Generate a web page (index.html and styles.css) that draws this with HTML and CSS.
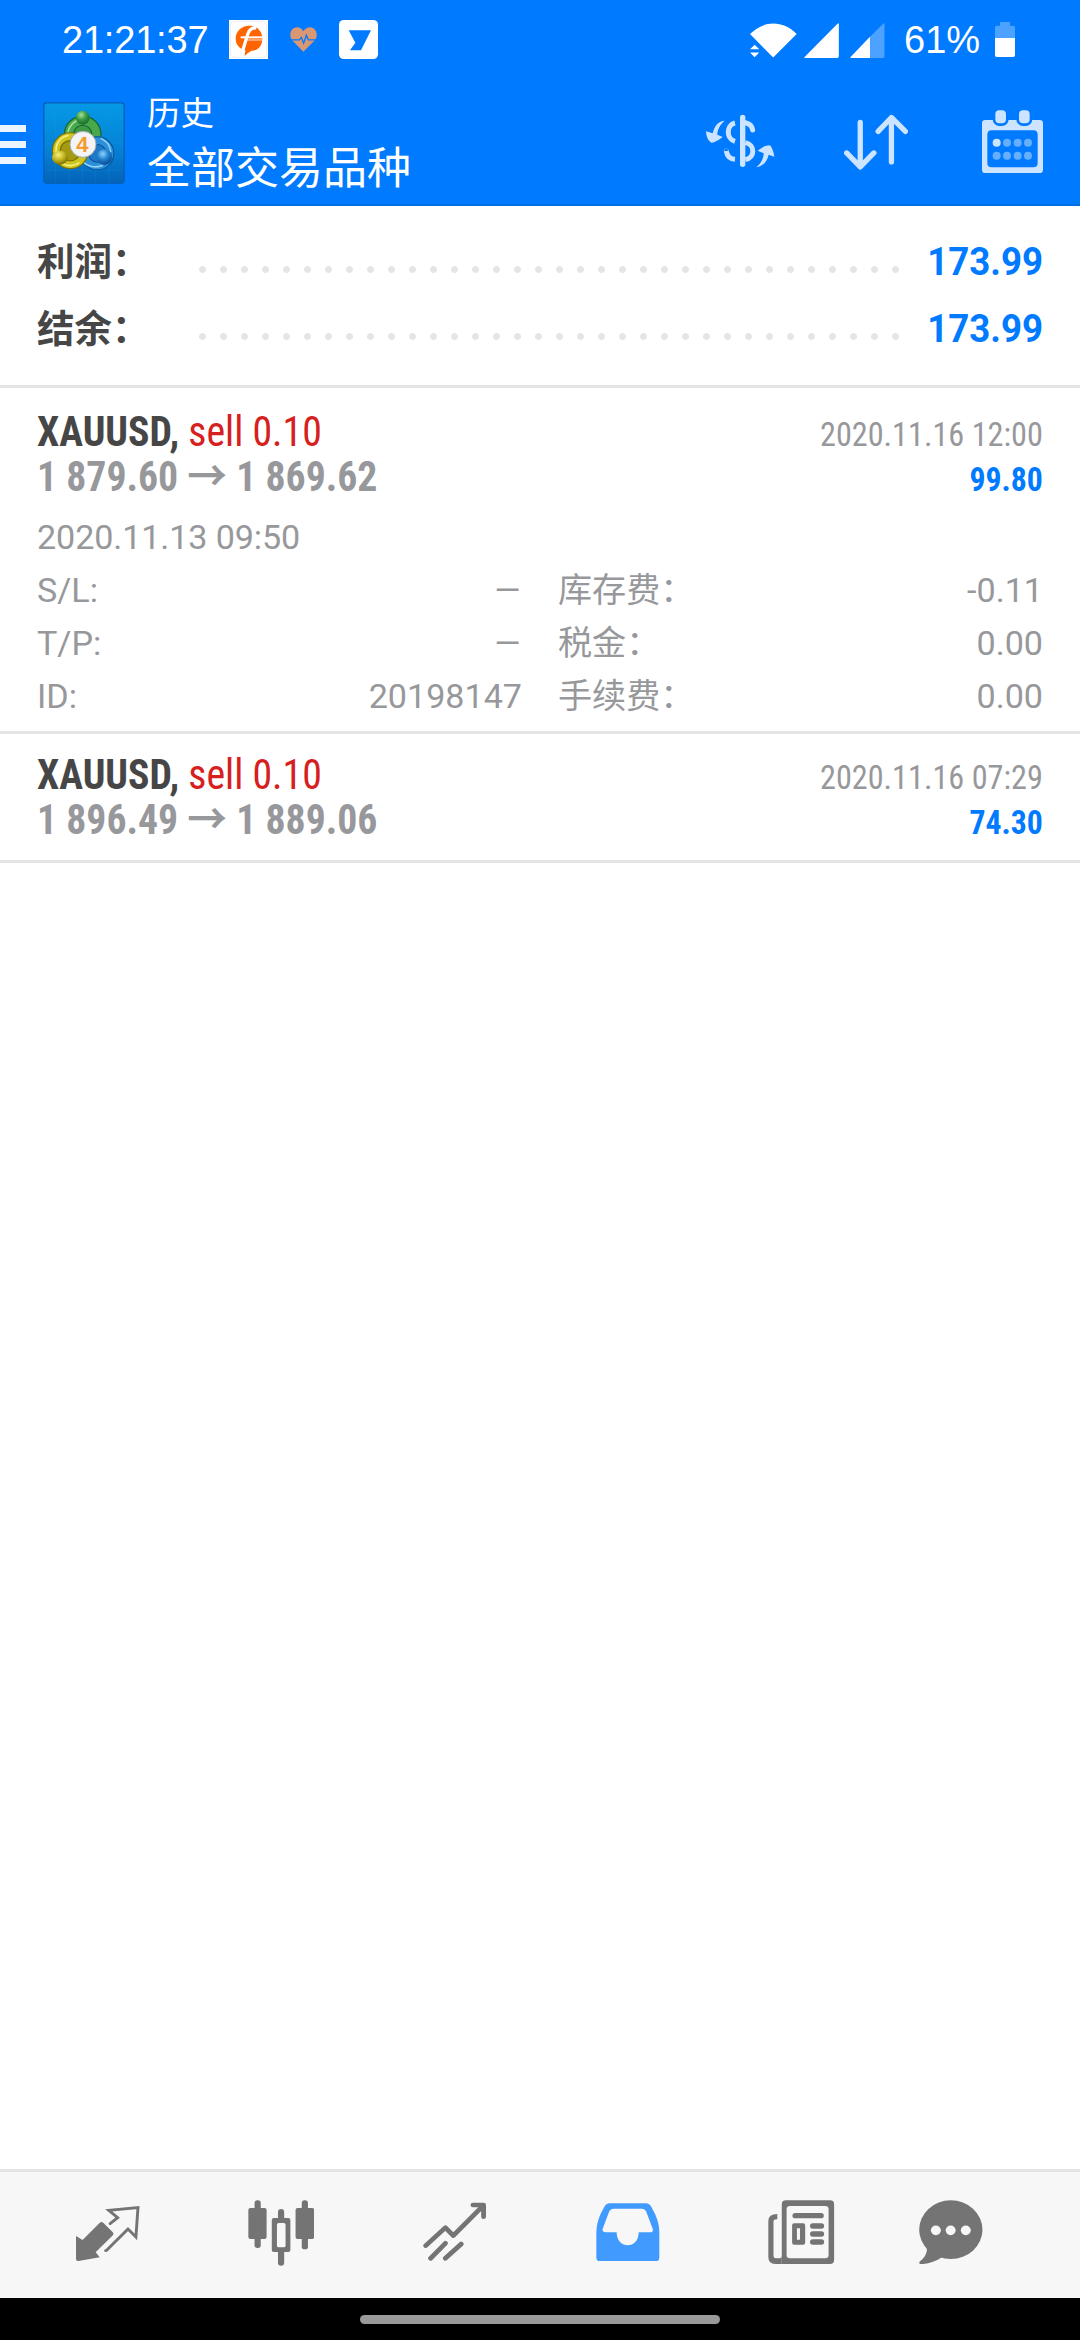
FILE: index.html
```html
<!DOCTYPE html>
<html lang="zh-CN">
<head>
<meta charset="utf-8">
<title>历史</title>
<link rel="stylesheet" href="styles.css">
</head>
<body>
<div class="screen">
  <header class="header">
    <div class="status">
      <span class="status-text clock">21:21:37</span>
      <svg class="note-f" viewBox="687 60 117 117"><rect x="687" y="60" width="117" height="117" fill="#fff"/><rect x="691" y="64" width="109" height="109" rx="14" fill="none" stroke="#dfe3f5" stroke-width="2"/><path fill="#ff6400" d="M748 77C772 77 787 94 787 116C787 139 772 152 755 152C748 155 742 160 734 168L736 151C718 146 707 133 707 116C707 94 724 77 748 77Z"/><path fill="none" stroke="#fff" stroke-width="10" d="M769 84C752 81 746 92 742 106L728 152"/><path stroke="#fff" stroke-width="6" d="M722 112H788"/><path stroke="#fff" stroke-width="2.500" d="M740 120H788"/></svg>
      <svg class="note-heart" viewBox="872 83 81 74"><path fill="#d99873" d="M912 157L880 124C867 110 872 84 893 83C902 83 909 88 912 95C916 88 923 83 932 83C953 84 958 110 945 124Z"/><path fill="none" stroke="#007aff" stroke-width="4" d="M872 121H900L906 114L913 131L921 107L927 121H953"/></svg>
      <svg class="note-seven" viewBox="1017 60 117 117"><rect x="1017" y="60" width="117" height="117" rx="14" fill="#fff"/><path fill="#007aff" d="M1046 91H1113L1083 151H1050L1066 128Z"/></svg>
      <svg class="wifi" viewBox="210 68 142 105"><path fill="#fff" d="M280 172L210 101C252 59 309 59 351 101ZM210 147L224 133L238 147ZM210 157H238L224 171Z"/></svg>
      <svg class="signal-one" viewBox="372 68 105 106"><path fill="#fff" d="M477 70V169Q477 174 472 174H374Q371 173 374 170L473 70Q477 67 477 70Z"/></svg>
      <svg class="signal-two" viewBox="510 68 105 106"><path fill="#4da2ff" d="M614 70V169Q614 174 609 174H570V110L610 70Q614 67 614 70Z"/><path fill="#fff" d="M570 110V174H512Q509 173 512 170Z"/></svg>
      <span class="status-text percent">61%</span>
      <svg class="battery" viewBox="945 66 60 105"><path fill="#4da2ff" d="M945 114V82Q945 77 950 77H960V66H990V77H1000Q1005 77 1005 82V114Z"/><path fill="#fff" d="M945 114H1005V166Q1005 171 1000 171H950Q945 171 945 166Z"/></svg>
    </div>
    <div class="appbar">
      <div class="menu"><i></i><i></i><i></i></div>
      <svg class="logo" viewBox="42 36 246 246">
        <defs>
          <linearGradient id="sky" x1="0" y1="0" x2="0" y2="1"><stop offset="0" stop-color="#0499e6"/><stop offset=".55" stop-color="#0583d6"/><stop offset="1" stop-color="#0463b8"/></linearGradient>
          <radialGradient id="green" cx=".4" cy=".3" r=".7"><stop offset="0" stop-color="#a4e39e"/><stop offset=".5" stop-color="#3b9d45"/><stop offset="1" stop-color="#176b2c"/></radialGradient>
          <radialGradient id="gold" cx=".4" cy=".3" r=".7"><stop offset="0" stop-color="#f5f07c"/><stop offset=".55" stop-color="#c2b31c"/><stop offset="1" stop-color="#786f08"/></radialGradient>
          <radialGradient id="blue" cx=".4" cy=".3" r=".7"><stop offset="0" stop-color="#8fd3ff"/><stop offset=".5" stop-color="#2385d2"/><stop offset="1" stop-color="#0a4c94"/></radialGradient>
        </defs>
        <rect x="44" y="38" width="242" height="242" rx="10" fill="url(#sky)" stroke="#0563bd" stroke-width="5"/>
        <path d="M80 42V276M120 42V276M160 42V276M200 42V276M240 42V276M48 80H282M48 120H282M48 160H282M48 200H282M48 240H282" stroke="#2ca5ee" stroke-opacity=".25" stroke-width="2"/>
        <circle cx="161" cy="133" r="41" fill="#3f9a45" stroke="#17642a" stroke-width="31"/>
        <circle cx="161" cy="133" r="41" fill="none" stroke="#4aa84c" stroke-width="24"/>
        <path d="M116 140C115 105 142 88 160 88" fill="none" stroke="#a6dd9f" stroke-width="5"/>
        <circle cx="205" cy="190" r="38" fill="#1f78c4" stroke="#084f9c" stroke-width="26"/>
        <circle cx="205" cy="190" r="38" fill="none" stroke="#2c8fd9" stroke-width="20"/>
        <path d="M215 145C233 154 244 164 245 186M158 211C174 231 202 235 222 226" fill="none" stroke="#91cff6" stroke-width="5"/>
        <circle cx="124" cy="182" r="42" fill="#a39a12" stroke="#7b7006" stroke-width="27"/>
        <circle cx="124" cy="182" r="42" fill="none" stroke="#d0c51e" stroke-width="20"/>
        <path d="M82 190C77 161 94 140 119 136M100 220C116 231 137 228 151 218" fill="none" stroke="#f4ee80" stroke-width="5"/>
        <circle cx="161" cy="83" r="21" fill="url(#green)"/>
        <ellipse cx="93" cy="203" rx="24" ry="21" fill="url(#gold)"/>
        <circle cx="226" cy="201" r="23" fill="url(#blue)"/>
        <circle cx="162" cy="163" r="39" fill="#f4f4f6" stroke="#a5abb0" stroke-width="3"/>
        <text x="160" y="185" class="logo-digit" text-anchor="middle">4</text>
      </svg>
      <div class="titles"><div class="title-small">历史</div><div class="title-main">全部交易品种</div></div>
      <svg class="act-currency" viewBox="75 343 210 162"><g fill="#cce4ff"><path d="M134 363C117 364 104 376 98 401L78 395C79 412 85 425 95 429C104 429 118 420 128 412L112 405C112 390 120 375 134 363Z"/><path d="M229 503C243 492 250 479 251 461L233 453C245 443 258 437 270 437C277 445 281 458 283 471L266 465C261 487 248 500 229 503Z"/></g><g fill="none" stroke="#cce4ff" stroke-width="15"><path d="M165 370C138 376 138 417 165 425M196 429C226 435 226 474 196 480"/><path d="M188 353V494" stroke-width="16" stroke-linecap="round"/><path d="M196 369C207 371 216 378 218 391" stroke-linecap="round"/><path d="M139 454C141 468 150 478 165 479"/><circle cx="139" cy="454" r=".5" stroke-width="14"/></g></svg>
      <svg class="act-sort" viewBox="492 343 193 168" fill="none" stroke="#cce4ff" stroke-width="16" stroke-linecap="round" stroke-linejoin="round"><path d="M541 368V501M500 460L541 502L582 460M635 487V354M595 395L635 353L677 395"/></svg>
      <svg class="act-calendar" viewBox="906 330 183 189"><path fill="#cce4ff" fill-rule="evenodd" d="M916 360H1079Q1089 360 1089 370V509Q1089 519 1079 519H916Q906 519 906 509V370Q906 360 916 360ZM935 391Q922 391 922 404V489Q922 502 935 502H1060Q1073 502 1073 489V404Q1073 391 1060 391Z"/><g fill="#cce4ff" stroke="#007aff" stroke-width="8"><rect x="942" y="327" width="40" height="47" rx="16"/><rect x="1013" y="327" width="40" height="47" rx="16"/></g><g fill="#66afff"><circle cx="950" cy="428" r="12" fill="#cce4ff"/><circle cx="981" cy="428" r="12"/><circle cx="1013" cy="428" r="12"/><circle cx="1044" cy="428" r="12"/><circle cx="950" cy="467" r="12"/><circle cx="981" cy="467" r="12"/><circle cx="1013" cy="467" r="12"/><circle cx="1044" cy="467" r="12"/></g></svg>
    </div>
  </header>
  <main class="content">
    <section class="summary">
      <div class="sum-row"><span class="sum-label">利润：</span><span class="dots"></span><span class="sum-value">173.99</span></div>
      <div class="sum-row"><span class="sum-label">结余：</span><span class="dots"></span><span class="sum-value">173.99</span></div>
    </section>
    <section class="deal deal-open">
      <div class="line"><div class="symbol"><b>XAUUSD,</b> <span class="sell">sell 0.10</span></div><div class="time">2020.11.16 12:00</div></div>
      <div class="line"><div class="prices">1 879.60 <span class="arrow">→</span> 1 869.62</div><div class="profit">99.80</div></div>
      <div class="details">
        <div class="opened">2020.11.13 09:50</div>
        <div class="cell"><span>S/L:</span><span class="dash">–</span></div><div class="cell"><span>库存费：</span><span>-0.11</span></div>
        <div class="cell"><span>T/P:</span><span class="dash">–</span></div><div class="cell"><span>税金：</span><span>0.00</span></div>
        <div class="cell"><span>ID:</span><span>20198147</span></div><div class="cell"><span>手续费：</span><span>0.00</span></div>
      </div>
    </section>
    <section class="deal">
      <div class="line"><div class="symbol"><b>XAUUSD,</b> <span class="sell">sell 0.10</span></div><div class="time">2020.11.16 07:29</div></div>
      <div class="line"><div class="prices">1 896.49 <span class="arrow">→</span> 1 889.06</div><div class="profit">74.30</div></div>
    </section>
  </main>
  <nav class="tabs">
    <svg class="tab-trade" viewBox="218 164 190 172" preserveAspectRatio="none"><path fill="#747474" d="M221 257L240 269L290 217Q295 213 300 217L328 246Q332 251 328 255L278 306L290 321L228 332Q221 333 221 326Z"/><path fill="none" stroke="#747474" stroke-width="8.500" stroke-linecap="round" d="M320 220L342 202L316 180L401 172L395 260L372 236L310 300L307 301"/></svg>
    <svg class="tab-candles" viewBox="717 150 193 198" preserveAspectRatio="none" fill="#747474"><rect x="718" y="174" width="53" height="93" rx="6"/><rect x="736" y="151" width="18" height="143" rx="8"/><path fill-rule="evenodd" d="M792 204H834Q840 204 840 210V300Q840 306 834 306H792Q786 306 786 300V210Q786 204 792 204ZM806 219Q801 219 801 224V287Q801 292 806 292H821Q826 292 826 287V224Q826 219 821 219Z"/><path d="M804 206V186Q804 177 813 177T822 186V206ZM804 304V338Q804 347 813 347T822 338V304Z"/><rect x="855" y="174" width="54" height="93" rx="6"/><rect x="873" y="151" width="18" height="147" rx="8"/></svg>
    <svg class="tab-chart" viewBox="1223 157 185 178" preserveAspectRatio="none" fill="none" stroke="#747474" stroke-width="14" stroke-linecap="round" stroke-linejoin="round"><path d="M1231 288L1288 234L1311 258L1398 168M1368 166H1399V201M1245 326L1288 281M1288 326L1334 283"/></svg>
    <svg class="tab-history" viewBox="161 158 185 176" preserveAspectRatio="none"><path fill="#419bff" fill-rule="evenodd" d="M200 159H306Q316 159 322 170Q345 210 345 245V322Q345 333 333 333H174Q162 333 162 322V245Q162 210 185 170Q191 159 200 159ZM213 175Q203 175 199 184L180 237Q179 246 189 246H221C221 298 285 298 285 246H318Q328 246 326 236L307 184Q303 175 294 175Z"/></svg>
    <svg class="tab-news" viewBox="663 149 194 193" preserveAspectRatio="none" fill="#747474"><path fill-rule="evenodd" d="M715 150H843Q855 150 855 162V329Q855 341 843 341H703V162Q703 150 715 150ZM727 167Q717 167 717 177V314Q717 324 727 324H829Q839 324 839 314V177Q839 167 829 167Z"/><path d="M690 191V207Q679 206 679 214V317Q679 324 686 324H696Q703 324 703 317V341H684Q664 341 664 320V212Q664 191 690 191Z"/><rect x="734" y="188" width="91" height="16" rx="8"/><path fill-rule="evenodd" d="M739 219H765Q771 219 771 225V277Q771 283 765 283H739Q733 283 733 277V225Q733 219 739 219ZM747 234V268H756V234Z"/><rect x="785" y="219" width="41" height="16" rx="8"/><rect x="785" y="243" width="41" height="16" rx="8"/><rect x="785" y="267" width="41" height="16" rx="8"/></svg>
    <svg class="tab-chat" viewBox="1101 149 186 193" preserveAspectRatio="none"><g fill="#747474"><ellipse cx="1193.500" cy="238" rx="92" ry="88"/><path d="M1116 280Q1125 290 1124 300Q1122 319 1104 333Q1098 342 1108 341.500Q1140 340 1168 321Z"/></g><g fill="#f7f7f7"><circle cx="1150" cy="240" r="14.500"/><circle cx="1193" cy="240" r="14.500"/><circle cx="1237" cy="240" r="14.500"/></g></svg>
  </nav>
  <div class="gesture"><div class="pill"></div></div>
</div>
</body>
</html>
```
FILE: styles.css
```css
* { box-sizing: border-box; }
body { margin: 0; background: #fff; font-family: Roboto, "Noto Sans CJK SC", sans-serif; }
svg { display: block; flex: none; }
.screen { width: 1080px; height: 2340px; display: flex; flex-direction: column; overflow: hidden; background: #fff; }

.header { height: 206px; background: #007aff; border-bottom: 2px solid #0070e2; color: #fff; }
.status { height: 80px; display: flex; align-items: flex-start; padding-left: 62px; }
.status-text { font: 38px/80px "Liberation Sans", sans-serif; white-space: nowrap; }
.clock { width: 167px; letter-spacing: -.2px; }
.percent { width: 91px; margin-left: 19px; }
.note-f { width: 39px; height: 39px; margin-top: 20px; }
.note-heart { width: 27px; height: 25px; margin: 27px 0 0 22px; }
.note-seven { width: 39px; height: 39px; margin: 20px 0 0 22px; }
.wifi { width: 47px; height: 35px; margin: 23px 0 0 372px; }
.signal-one { width: 35px; height: 35px; margin: 23px 0 0 7px; }
.signal-two { width: 35px; height: 35px; margin: 23px 0 0 11px; }
.battery { width: 20px; height: 35px; margin-top: 22px; }

.appbar { height: 124px; display: flex; align-items: flex-start; }
.menu { width: 26px; margin-top: 45px; display: grid; gap: 9px; }
.menu i { height: 7px; background: #ebf5ff; }
.logo { width: 82px; height: 82px; margin: 22px 0 0 17px; }
.logo-digit { font: bold 66px "Liberation Sans", sans-serif; fill: #f39a2e; }
.titles { margin: 9px 0 0 22px; width: 559px; }
.title-small { font-size: 33.500px; line-height: 50px; }
.title-main { font-size: 44px; line-height: 60px; }
.act-currency { width: 70px; height: 54px; margin-top: 34px; margin-left: -1px; }
.act-sort { width: 64px; height: 56px; margin: 34px 0 0 69px; }
.act-calendar { width: 61px; height: 63px; margin: 30px 0 0 74px; }

.content { flex: 1; }
.summary { padding: 23px 37px 22px; height: 182px; border-bottom: 3px solid #e5e5e5; }
.sum-row { display: flex; height: 67px; line-height: 67px; font-size: 37.500px; font-weight: 700; }
.sum-label { width: 155px; color: #464646; }
.dots { width: 714px; height: 7px; margin-top: 37px; background: radial-gradient(circle at 10.500px 3.500px, #e5e5e5 3px, transparent 3.800px) 0 0 / 21px 7px repeat-x; }
.sum-value { margin-left: auto; font-size: 38px; color: #007aff; transform: scaleX(.965); transform-origin: right; }

.deal { padding: 18px 37px; border-bottom: 3px solid #e5e5e5; }
.deal-open { padding: 21px 37px 8px; }
.line { display: flex; justify-content: space-between; align-items: baseline; height: 45px; line-height: 45px; font-family: "Roboto Condensed", Roboto, "Noto Sans CJK SC", sans-serif; font-stretch: 75%; white-space: nowrap; }
.symbol, .prices { transform: scaleX(.946); transform-origin: left; }
.time { transform: scaleX(.945); transform-origin: right; }
.profit { transform: scaleX(.93); transform-origin: right; }
.symbol { font-size: 42px; color: #464646; }
.sell { color: #d62020; }
.prices { font-size: 42px; font-weight: 700; color: #97989b; }
.arrow { font-family: "Noto Sans CJK SC", sans-serif; line-height: 0; }
.time { font-size: 34.125px; color: #97989b; }
.profit { font-size: 34.125px; font-weight: 700; color: #007aff; }
.details { margin-top: 12px; display: grid; grid-template-columns: 485px 485px; column-gap: 36px; font-size: 34.125px; line-height: 53px; color: #97989b; }
.opened { grid-column: 1 / 3; letter-spacing: -.1px; }
.cell { display: flex; justify-content: space-between; height: 53px; }
.dash { transform: scaleX(1.3); transform-origin: right; }

.tabs { height: 129px; border-top: 3px solid #e5e5e5; background: #f7f7f7; display: grid; grid-template-columns: repeat(5, 173.500px) 125.500px; justify-items: center; padding-left: 20.750px; }
.tab-trade { width: 65.400px; height: 57.300px; margin-top: 32.700px; }
.tab-candles { width: 66.500px; height: 66px; margin-top: 28px; }
.tab-chart { width: 63.700px; height: 59.300px; margin-top: 30.300px; }
.tab-history { width: 63.700px; height: 58.700px; margin-top: 30.700px; }
.tab-news { width: 66.800px; height: 64.300px; margin-top: 27.700px; }
.tab-chat { width: 64px; height: 64.300px; margin-top: 27.700px; }
.gesture { height: 42px; background: #000; padding-top: 17px; }
.pill { width: 360px; height: 9px; margin: 0 auto; border-radius: 5px; background: #999; }
```
